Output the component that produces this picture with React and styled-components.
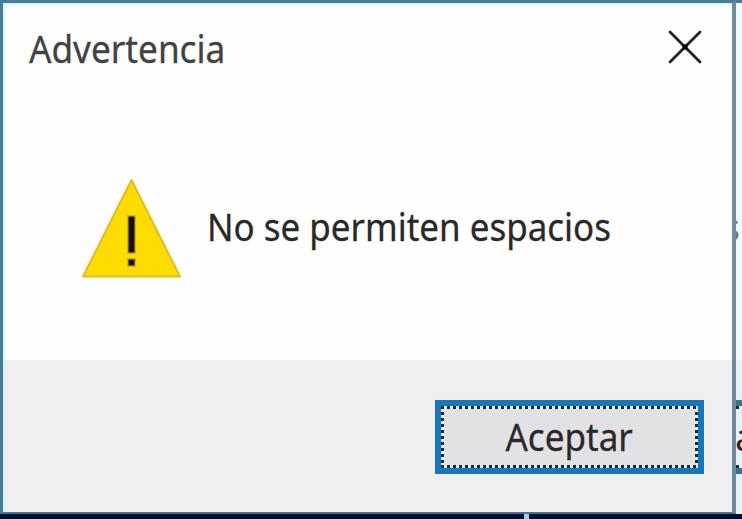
import React from "react";
import styled, { createGlobalStyle } from "styled-components";

const GlobalStyle = createGlobalStyle`
  * { box-sizing: border-box; }
  body { margin: 0; overflow: hidden; background: #fff; }
`;

const Desktop = styled.div`
  display: flex;
  width: 742px;
  height: 519px;
  overflow: hidden;
  padding-bottom: 5px;
  background: #020d2e;
  font-family: "Noto Sans", "Open Sans", sans-serif;
  position: relative;
`;

const Dialog = styled.main`
  display: flex;
  flex-direction: column;
  flex: 0 0 736px;
  height: 514px;
  border: 3px solid #477d9c;
  border-right: 4px solid #6e8ca0;
  border-bottom: 2px solid #48749b;
  background: #fefefe;
  box-shadow: inset 2px 2px 2px #d5f7ff;
`;

const TitleBar = styled.header`
  display: flex;
  justify-content: space-between;
  align-items: flex-start;
  height: 104px;
  padding: 20px 30px 0 26px;
`;

const Label = styled.span`
  display: block;
  flex: none;
  font-size: 37.5px;
  line-height: 52px;
  white-space: nowrap;
  color: ${(p) => p.$color || "#292929"};
  -webkit-text-stroke: 0.3px currentColor;
  transform: scaleX(${(p) => p.$stretch});
  transform-origin: ${(p) => p.$origin || "left"};
`;

const CloseButton = styled.button`
  display: flex;
  margin-top: 7px;
  padding: 0;
  border: 0;
  background: none;
`;

const Body = styled.section`
  display: flex;
  flex: 1;
  align-items: flex-start;
  padding: 68px 0 0 76px;
`;

const Message = styled.div`
  margin: 26px 0 0 24px;
`;

const Footer = styled.footer`
  display: flex;
  justify-content: flex-end;
  height: 152px;
  padding: 40px 28px 0 0;
  background: #efefef;
  box-shadow: inset 2px 0 2px #d9f1fa;
`;

const AcceptButton = styled.button`
  display: flex;
  width: 269px;
  height: 74px;
  padding: 0;
  border: 6px solid #1976b9;
  background: #e2e2e4;
  font-family: inherit;
`;

const dots = "#142b40 0 3px, #e8f0f6 3px 6px";
const FocusRing = styled.span`
  display: flex;
  align-items: center;
  justify-content: center;
  width: 100%;
  height: 100%;
  background:
    repeating-linear-gradient(90deg, ${dots}) top / 100% 3px no-repeat,
    repeating-linear-gradient(90deg, ${dots}) bottom / 100% 3px no-repeat,
    repeating-linear-gradient(180deg, ${dots}) left / 3px 100% no-repeat,
    repeating-linear-gradient(180deg, ${dots}) right / 3px 100% no-repeat;
`;

const Behind = styled.aside`
  display: flex;
  flex-direction: column;
  flex: 1;
  overflow: hidden;
  border-top: 3px solid #477d9c;
  background: linear-gradient(#eefcff 0 357px, #e5f3f8 357px);
`;

const ClippedText = styled.span`
  display: block;
  width: 6px;
  height: 50px;
  margin-top: 199px;
  overflow: hidden;
  font-size: 37.5px;
  line-height: 50px;
  color: #60798b;
  text-indent: -14px;
`;

const ClippedButton = styled.span`
  display: block;
  width: 6px;
  height: 74px;
  margin-top: 148px;
  overflow: hidden;
  border: solid #39758d;
  border-width: 6px 0;
  background:
    linear-gradient(90deg, #142b40 0 3px, #e8f0f6 3px) top / 100% 3px no-repeat,
    linear-gradient(90deg, #142b40 0 3px, #e8f0f6 3px) bottom / 100% 3px no-repeat;
  font-size: 37.5px;
  line-height: 61px;
  text-indent: -1px;
  color: #33232b;
`;

const TaskMark = styled.i`
  position: absolute;
  left: 524px;
  bottom: 0;
  width: 5px;
  height: 5px;
  background: #a9cbdc;
`;

const WarningIcon = () => (
  <svg width="104" height="104" viewBox="0 0 104 104" role="img" aria-label="Advertencia">
    <path d="M52.5 5 101 101.5H4Z" fill="#ffdc00" stroke="#e2bd1d" strokeWidth="2" strokeLinejoin="round" />
    <path d="M48 40h9v39h-9zM48 83h9v9h-9z" fill="#d0b12c" />
    <path d="M49.5 41.500h6v36h-6zM49.500 84.500h6v6h-6z" fill="#171300" />
  </svg>
);

const CloseIcon = () => (
  <svg width="34" height="34" viewBox="0 0 34 34">
    <path d="m2 2 30 30M32 2 2 32" stroke="#222" strokeWidth="2.8" strokeLinecap="round" />
    <path d="M14.500 14.500h5v5h-5z" fill="#000" />
  </svg>
);

export default function App() {
  return (
    <>
      <GlobalStyle />
      <Desktop>
        <Dialog>
          <TitleBar>
            <Label $stretch={0.938} $color="#424242">Advertencia</Label>
            <CloseButton aria-label="Cerrar"><CloseIcon /></CloseButton>
          </TitleBar>
          <Body>
            <WarningIcon />
            <Message><Label $stretch={0.932}>No se permiten espacios</Label></Message>
          </Body>
          <Footer>
            <AcceptButton>
              <FocusRing>
                <Label $stretch={0.935} $origin="center">Aceptar</Label>
              </FocusRing>
            </AcceptButton>
          </Footer>
        </Dialog>
        <Behind>
          <ClippedText>s</ClippedText>
          <ClippedButton>a</ClippedButton>
        </Behind>
        <TaskMark />
      </Desktop>
    </>
  );
}
